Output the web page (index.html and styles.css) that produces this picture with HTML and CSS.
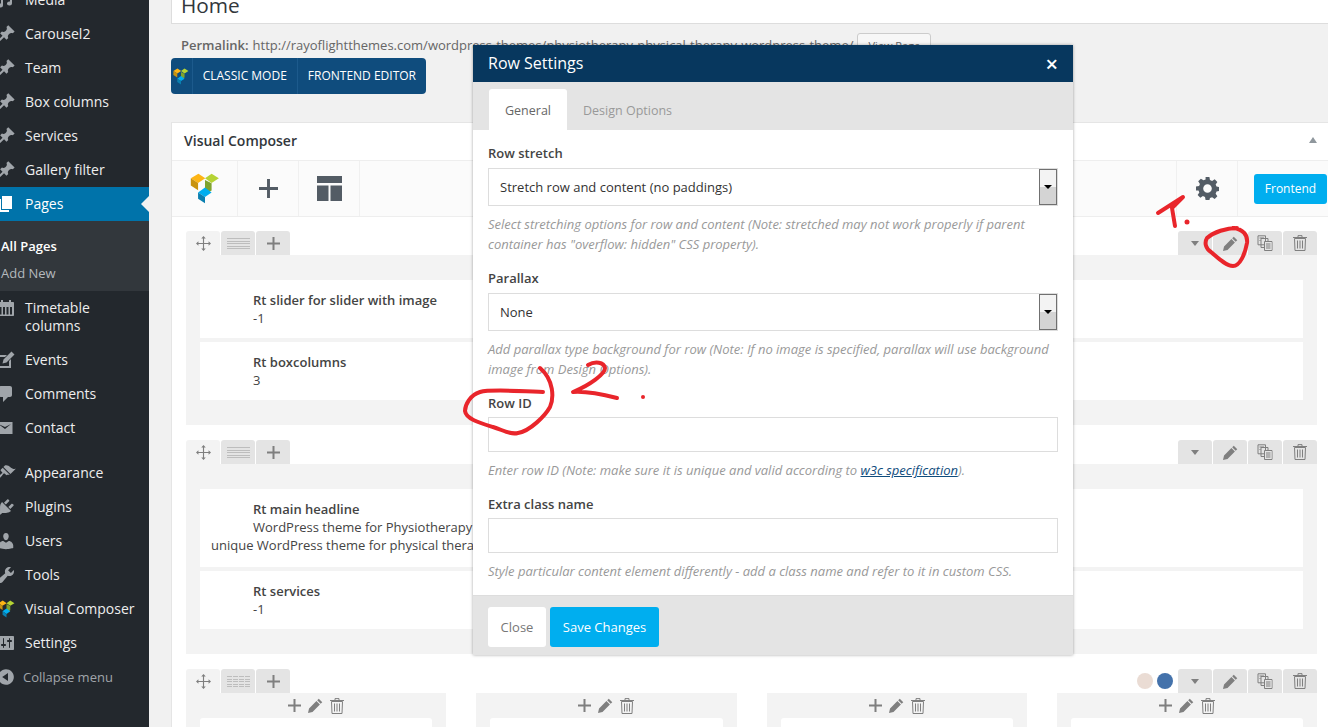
FILE: index.html
```html
<!DOCTYPE html>
<html lang="en">
<head>
    <meta charset="UTF-8">
    <meta name="viewport" content="width=device-width, initial-scale=1.0">
    <title>Edit Page</title>
    <link rel="stylesheet" href="styles.css">
</head>
<body>
    <!-- shared icons -->
    <svg class="icon-defs" width="0" height="0">
        <symbol id="i-pin" viewBox="0 0 20 20"><path d="M10.44 3.02l1.82-1.82 6.36 6.35-1.83 1.82c-1.05-.68-2.48-.57-3.41.36l-.75.75c-.92.93-1.04 2.35-.35 3.41l-1.83 1.82-2.41-2.41-2.8 2.79c-.42.42-3.38 2.71-3.8 2.29s1.86-3.39 2.28-3.81l2.79-2.79L4.1 9.36l1.83-1.82c1.05.69 2.48.57 3.4-.36l.75-.75c.93-.92 1.05-2.35.36-3.41z"/></symbol>
        <symbol id="i-vc" viewBox="60 514 90 94">
            <path fill="#fdb515" d="M62 530l23-14 21 14-22 14z"/>
            <path fill="#c8930f" d="M62 530l22 14v22l-22-14z"/>
            <path fill="#b5d334" d="M105 530l20-14 22 14-22 14z"/>
            <path fill="#7fa32e" d="M105 535l20 10v22l-20 11z"/>
            <path fill="#00aeef" d="M84 573l21-15 20 15-20 14z"/>
            <path fill="#0a7fb0" d="M84 573l21 14v19l-21-14z"/>
        </symbol>
        <symbol id="i-move" viewBox="0 0 16 16"><path d="M8 0l2.4 2.6H8.6v4.8h4.8V5.600L16 8l-2.600 2.400V8.600H8.600v4.800h1.800L8 16l-2.400-2.600h1.800V8.600H2.600v1.800L0 8l2.600-2.400v1.800h4.800V2.600H5.600z"/></symbol>
        <symbol id="i-plus" viewBox="0 0 13 13"><path d="M5.500 0h2v5.500H13v2H7.500V13h-2V7.500H0v-2h5.500z"/></symbol>
        <symbol id="i-pencil" viewBox="0 0 16 16"><path d="M11.500.8l3.700 3.700-1.700 1.700-3.700-3.700zM9 3.300L12.700 7l-7.900 7.900L0 16l1.100-4.800z"/></symbol>
        <symbol id="i-copy" viewBox="0 0 16 16"><path fill="none" stroke="currentColor" d="M1 .8h7.500v9H1zM4 3.500h7v9H4zM7.500 6.500H15v9H7.500z"/><path fill="#e4e4e4" d="M8 7h6.500v8H8z"/><path fill="none" stroke="currentColor" d="M9 9h4.500M9 11h4.500M9 13h4.500M2.500 3h4.500M2.500 5.500h1"/></symbol>
        <symbol id="i-trash" viewBox="0 0 14 16"><path fill="none" stroke="currentColor" d="M1.500 3.500h11l-.5 12H2zM0 2.500h14M5 2.500V.6h4v1.900M4.500 5.500v8M7 5.500v8M9.500 5.500v8"/></symbol>
    </svg>

    <div class="layout">
        <!-- admin menu -->
        <aside class="sidebar">
            <ul class="menu">
                <li class="menu-item"><svg class="menu-icon" viewBox="0 0 20 20"><path d="M5 6l11-3v10.500a2.500 2 0 1 1-2-2V6.500L7 8.300v7.200a2.500 2 0 1 1-2-2z"/></svg>Media</li>
                <li class="menu-item"><svg class="menu-icon"><use href="#i-pin"/></svg>Carousel2</li>
                <li class="menu-item"><svg class="menu-icon"><use href="#i-pin"/></svg>Team</li>
                <li class="menu-item"><svg class="menu-icon"><use href="#i-pin"/></svg>Box columns</li>
                <li class="menu-item"><svg class="menu-icon"><use href="#i-pin"/></svg>Services</li>
                <li class="menu-item"><svg class="menu-icon"><use href="#i-pin"/></svg>Gallery filter</li>
                <li class="menu-item active"><svg class="menu-icon" viewBox="0 0 20 20"><path d="M6 15V2h10v13H6zm-1 1h8v2H3V5h2v11z"/></svg>Pages</li>
                <li class="submenu">
                    <div class="sub-current">All Pages</div>
                    <div class="sub-link">Add New</div>
                </li>
                <li class="menu-item tall"><svg class="menu-icon" viewBox="0 0 20 20"><path d="M3 4h2V2h2v2h6V2h2v2h2c.6 0 1 .4 1 1v12c0 .6-.4 1-1 1H3c-.6 0-1-.4-1-1V5c0-.6.4-1 1-1zm.5 5v7.500h2V9zm3.500 0v7.500h2V9zm3.500 0v7.500h2V9zm3.500 0v7.500h2V9z"/></svg><span>Timetable<br>columns</span></li>
                <li class="menu-item"><svg class="menu-icon" viewBox="0 0 20 20"><path d="M2 5h9L9 7H4v9h9v-5l2-2v9H2zM15.500 1.500l3 3-8 8-4 1 1-4z"/></svg>Events</li>
                <li class="menu-item"><svg class="menu-icon" viewBox="0 0 20 20"><path d="M5 2h9c1.100 0 2 .9 2 2v7c0 1.100-.9 2-2 2h-2l-5 5v-5H5c-1.100 0-2-.9-2-2V4c0-1.100.9-2 2-2z"/></svg>Comments</li>
                <li class="menu-item"><svg class="menu-icon" viewBox="0 0 20 20"><path d="M1 4h15.500v12H1zM2.500 6L9 11l6-5-6 3z" fill-rule="evenodd"/></svg>Contact</li>
                <li class="menu-item spaced"><svg class="menu-icon" viewBox="0 0 20 20"><path d="M14.480 11.060L7.410 3.990l1.500-1.500c.5-.56 2.300-.47 3.510.32 1.210.8 1.430 1.280 2.910 2.100 1.180.64 2.450 1.260 4.450.85zm-.71.71L6.700 4.700 4.930 6.470c-.39.39-.39 1.020 0 1.410l1.060 1.060c.39.39.39 1.030 0 1.420-.6.6-1.430 1.110-2.210 1.690-.35.26-.7.53-1.010.84C1.430 13.230.4 14.850 1.160 15.600c.68.68 1.900.19 2.930-.81.670-.64 1.180-1.170 1.670-1.770.59-.77 1.100-1.600 1.700-2.210.39-.39 1.020-.39 1.420 0l1.060 1.060c.39.39 1.020.39 1.410 0z"/></svg>Appearance</li>
                <li class="menu-item"><svg class="menu-icon" viewBox="0 0 20 20"><path d="M13.110 4.360L9.870 7.600 8 5.730l3.240-3.240c.35-.34 1.050-.2 1.560.32.52.51.66 1.210.31 1.550zm-8 1.770l.91-1.120 9.010 9.010-1.190.84c-.71.71-2.630 1.160-3.820 1.160H6.140L4.900 17.260c-.59.59-1.540.59-2.120 0-.59-.58-.59-1.530 0-2.120l1.240-1.240v-3.880c0-1.130.4-3.190 1.090-3.890zm7.260 3.970l3.240-3.240c.34-.35 1.040-.21 1.550.31.52.51.66 1.210.31 1.550l-3.240 3.250z"/></svg>Plugins</li>
                <li class="menu-item"><svg class="menu-icon" viewBox="0 0 20 20"><path d="M10 9.250c-2.270 0-2.730-3.440-2.730-3.440C7 4.020 7.820 2 9.970 2c2.160 0 2.980 2.020 2.710 3.810 0 0-.41 3.440-2.680 3.440zm0 2.570L12.720 10c2.390 0 4.520 2.330 4.520 4.530v2.490s-3.650 1.130-7.240 1.130c-3.650 0-7.240-1.130-7.240-1.130v-2.490c0-2.250 1.940-4.480 4.470-4.480z"/></svg>Users</li>
                <li class="menu-item"><svg class="menu-icon" viewBox="0 0 20 20"><path d="M16.680 9.770c-1.340 1.340-3.300 1.670-4.950.99l-5.410 6.520c-.99.99-2.590.99-3.580 0s-.99-2.590 0-3.570l6.520-5.420c-.68-1.650-.35-3.610.99-4.950 1.280-1.280 3.120-1.620 4.720-1.060l-2.890 2.890 2.820 2.820 2.860-2.870c.53 1.580.18 3.390-1.080 4.650z"/></svg>Tools</li>
                <li class="menu-item"><svg class="menu-icon vc-small"><use href="#i-vc"/></svg>Visual Composer</li>
                <li class="menu-item"><svg class="menu-icon" viewBox="0 0 20 20"><path fill-rule="evenodd" d="M18 16V4c0-.55-.45-1-1-1H3c-.55 0-1 .45-1 1v12c0 .55.45 1 1 1h14c.55 0 1-.45 1-1zM8 11h1c.55 0 1 .45 1 1s-.45 1-1 1H8v1.500c0 .28-.22.5-.5.5s-.5-.22-.5-.5V13H6c-.55 0-1-.45-1-1s.45-1 1-1h1V5.500c0-.28.22-.5.5-.5s.5.22.5.5V11zm5-2h-1c-.55 0-1-.45-1-1s.45-1 1-1h1V5.500c0-.28.22-.5.5-.5s.5.22.5.5V7h1c.55 0 1 .45 1 1s-.45 1-1 1h-1v5.500c0 .28-.22.5-.5.5s-.5-.22-.5-.5V9z"/></svg>Settings</li>
                <li class="menu-item collapse"><svg class="menu-icon" viewBox="0 0 20 20"><path d="M10 2.160c4.330 0 7.840 3.510 7.840 7.840s-3.510 7.840-7.840 7.840S2.160 14.330 2.160 10 5.710 2.160 10 2.160zm2 11.720V6.120L6.180 9.970z"/></svg>Collapse menu</li>
            </ul>
        </aside>

        <main class="content">
            <div class="title-box">Home</div>
            <div class="permalink">
                <b>Permalink:</b> http://rayoflightthemes.com/wordpress-themes/physiotherapy-physical-therapy-wordpress-theme/
                <span class="view-page">View Page</span>
            </div>
            <div class="mode-bar">
                <span class="mode-logo"><svg class="mode-logo-icon"><use href="#i-vc"/></svg></span>
                <span class="mode-btn">CLASSIC MODE</span>
                <span class="mode-btn">FRONTEND EDITOR</span>
            </div>

            <section class="panel">
                <header class="panel-head">
                    <h2>Visual Composer</h2>
                    <span class="panel-toggle"></span>
                </header>
                <div class="toolbar">
                    <span class="tool"><svg class="tool-logo"><use href="#i-vc"/></svg></span>
                    <span class="tool"><svg class="tool-plus"><use href="#i-plus"/></svg></span>
                    <span class="tool">
                        <svg class="tool-layout" viewBox="0 0 25 25"><path d="M0 0h25v7H0zM0 9.500h11.500V25H0zM13.500 9.500H25V25H13.500z"/></svg>
                    </span>
                    <span class="toolbar-gap"></span>
                    <span class="tool tool-left"><svg class="tool-gear" viewBox="0 0 24 24"><path fill-rule="evenodd" d="M10 0h4l.6 3.200 2.200.9L19.500 2.300l2.800 2.800-1.800 2.700.9 2.200 3.200.6v4l-3.200.6-.9 2.200 1.800 2.700-2.800 2.800-2.700-1.800-2.200.9L14 24h-4l-.6-3.200-2.200-.9-2.700 1.800-2.800-2.800 1.800-2.700-.9-2.200L0 14v-4l3.200-.6.9-2.200-1.800-2.700 2.800-2.800 2.700 1.800 2.200-.9zM12 7.500a4.500 4.500 0 1 0 0 9 4.500 4.500 0 0 0 0-9z"/></svg></span>
                    <span class="frontend-wrap"><span class="frontend-btn">Frontend</span></span>
                </div>

                <div class="row-block">
                    <div class="row-tabs">
                        <span class="row-tab first"><svg class="ic-move"><use href="#i-move"/></svg></span>
                        <span class="row-tab"><span class="lines"></span></span>
                        <span class="row-tab"><svg class="ic-plus"><use href="#i-plus"/></svg></span>
                        <span class="row-tabs-gap"></span>
                        <span class="row-tab"><span class="caret"></span></span>
                        <span class="row-tab"><svg class="ic-pencil"><use href="#i-pencil"/></svg></span>
                        <span class="row-tab"><svg class="ic-copy"><use href="#i-copy"/></svg></span>
                        <span class="row-tab"><svg class="ic-trash"><use href="#i-trash"/></svg></span>
                    </div>
                    <div class="row-body row-one">
                        <div class="card"><b>Rt slider for slider with image</b><p>-1</p></div>
                        <div class="card"><b>Rt boxcolumns</b><p>3</p></div>
                    </div>
                </div>

                <div class="row-block">
                    <div class="row-tabs">
                        <span class="row-tab first"><svg class="ic-move"><use href="#i-move"/></svg></span>
                        <span class="row-tab"><span class="lines"></span></span>
                        <span class="row-tab"><svg class="ic-plus"><use href="#i-plus"/></svg></span>
                        <span class="row-tabs-gap"></span>
                        <span class="row-tab"><span class="caret"></span></span>
                        <span class="row-tab"><svg class="ic-pencil"><use href="#i-pencil"/></svg></span>
                        <span class="row-tab"><svg class="ic-copy"><use href="#i-copy"/></svg></span>
                        <span class="row-tab"><svg class="ic-trash"><use href="#i-trash"/></svg></span>
                    </div>
                    <div class="row-body row-one">
                        <div class="card card-long">
                            <b>Rt main headline</b>
                            <p>WordPress theme for Physiotherapy</p>
                            <p class="outdent">unique WordPress theme for physical therapy</p>
                        </div>
                        <div class="card"><b>Rt services</b><p>-1</p></div>
                    </div>
                </div>

                <div class="row-block">
                    <div class="row-tabs">
                        <span class="row-tab first"><svg class="ic-move"><use href="#i-move"/></svg></span>
                        <span class="row-tab"><span class="lines four"></span></span>
                        <span class="row-tab"><svg class="ic-plus"><use href="#i-plus"/></svg></span>
                        <span class="row-tabs-gap"></span>
                        <span class="row-dot photo"></span>
                        <span class="row-dot blue"></span>
                        <span class="row-tab"><span class="caret"></span></span>
                        <span class="row-tab"><svg class="ic-pencil"><use href="#i-pencil"/></svg></span>
                        <span class="row-tab"><svg class="ic-copy"><use href="#i-copy"/></svg></span>
                        <span class="row-tab"><svg class="ic-trash"><use href="#i-trash"/></svg></span>
                    </div>
                    <div class="columns">
                        <div class="column">
                            <div class="col-tools"><svg class="ic-plus"><use href="#i-plus"/></svg><svg class="ic-pencil"><use href="#i-pencil"/></svg><svg class="ic-trash"><use href="#i-trash"/></svg></div>
                            <div class="col-card"></div>
                        </div>
                        <div class="column">
                            <div class="col-tools"><svg class="ic-plus"><use href="#i-plus"/></svg><svg class="ic-pencil"><use href="#i-pencil"/></svg><svg class="ic-trash"><use href="#i-trash"/></svg></div>
                            <div class="col-card"></div>
                        </div>
                        <div class="column">
                            <div class="col-tools"><svg class="ic-plus"><use href="#i-plus"/></svg><svg class="ic-pencil"><use href="#i-pencil"/></svg><svg class="ic-trash"><use href="#i-trash"/></svg></div>
                            <div class="col-card"></div>
                        </div>
                        <div class="column">
                            <div class="col-tools"><svg class="ic-plus"><use href="#i-plus"/></svg><svg class="ic-pencil"><use href="#i-pencil"/></svg><svg class="ic-trash"><use href="#i-trash"/></svg></div>
                            <div class="col-card"></div>
                        </div>
                    </div>
                </div>
            </section>
        </main>
    </div>

    <!-- Row Settings dialog -->
    <div class="modal">
        <div class="modal-head">
            <span>Row Settings</span>
            <span class="modal-close">&times;</span>
        </div>
        <div class="modal-tabs">
            <span class="modal-tab current">General</span>
            <span class="modal-tab">Design Options</span>
        </div>
        <div class="modal-body">
            <div class="field">
                <label>Row stretch</label>
                <div class="select"><span>Stretch row and content (no paddings)</span><span class="select-arrow"></span></div>
                <p class="hint">Select stretching options for row and content (Note: stretched may not work properly if parent container has "overflow: hidden" CSS property).</p>
            </div>
            <div class="field">
                <label>Parallax</label>
                <div class="select"><span>None</span><span class="select-arrow"></span></div>
                <p class="hint">Add parallax type background for row (Note: If no image is specified, parallax will use background image from Design Options).</p>
            </div>
            <div class="field">
                <label>Row ID</label>
                <input type="text" class="text-input">
                <p class="hint">Enter row ID (Note: make sure it is unique and valid according to <a href="#">w3c specification</a>).</p>
            </div>
            <div class="field">
                <label>Extra class name</label>
                <input type="text" class="text-input">
                <p class="hint">Style particular content element differently - add a class name and refer to it in custom CSS.</p>
            </div>
        </div>
        <div class="modal-foot">
            <span class="btn-close">Close</span>
            <span class="btn-save">Save Changes</span>
        </div>
    </div>

    <!-- red marker scribbles on top of the screenshot -->
    <svg class="scribbles" viewBox="0 0 1328 727">
        <path d="M1158 213L1183 197 1172 208 1175 226"/>
        <path d="M1237 228C1226 228 1214 232 1207 238 1204 243 1206 249 1211 252 1218 258 1226 266 1233 266 1240 266 1245 254 1247 243 1248 235 1243 229 1233 228"/>
        <path d="M543 392C520 391 490 389 480 392 470 395 465 405 465 411 466 419 480 423 493 427 503 430 510 435 518 433 530 431 545 416 550 407 554 398 554 380 540 368"/>
        <path d="M588 365C595 361 604 362 605 368 605 374 590 385 573 392 585 391 605 395 617 398"/>
        <circle class="dot" cx="1187" cy="222" r="2.500"/>
        <circle class="dot" cx="643" cy="397" r="2"/>
    </svg>
</body>
</html>
```

FILE: styles.css
```css
* {
    box-sizing: border-box;
}
html, body {
    margin: 0;
    height: 727px;
    overflow: hidden;
}
body {
    font-family: "Open Sans", sans-serif;
    font-size: 13px;
    color: #444;
    background-color: #f1f1f1;
}
.icon-defs {
    position: absolute;
}
.layout {
    display: flex;
    height: 727px;
    overflow: hidden;
}

/* Sidebar */
.sidebar {
    flex: 0 0 149px;
    background-color: #23282d;
    color: #eee;
    font-size: 14px;
}
.menu {
    list-style: none;
    margin: -17px 0 0;
    padding: 0;
}
.menu-item {
    position: relative;
    display: flex;
    align-items: center;
    height: 34px;
    padding-left: 25px;
    line-height: 18px;
}
.menu-icon {
    position: absolute;
    left: -4px;
    top: 7px;
    width: 20px;
    height: 20px;
    fill: #a0a5aa;
}
.menu-item.active {
    background-color: #0073aa;
    color: #fff;
}
.menu-item.active .menu-icon {
    fill: #fff;
}
.menu-item.active::after {
    content: "";
    position: absolute;
    right: 0;
    top: 9px;
    border: 8px solid transparent;
    border-right-color: #f1f1f1;
    border-left-width: 0;
}
.menu-item.tall {
    height: 52px;
}
.menu-item.spaced {
    margin-top: 11px;
}
.menu-item.collapse {
    padding-left: 23px;
    font-size: 13px;
    color: #a0a5aa;
}
.vc-small {
    left: -2px;
    width: 17px;
    height: 18px;
    top: 8px;
}
.submenu {
    height: 70px;
    padding: 12px 0 0 1px;
    background-color: #32373c;
    font-size: 13px;
    line-height: 27px;
}
.sub-current {
    font-weight: 600;
    color: #fff;
}
.sub-link {
    color: #b4b9be;
}

/* Main column */
.content {
    flex: 1;
    min-width: 0;
    padding-left: 22px;
}
.title-box {
    height: 39px;
    margin-top: -15px;
    padding: 6px 0 0 9px;
    background-color: #fff;
    border: 1px solid #ddd;
    border-right: 0;
    font-size: 20.8px;
    line-height: 26px;
    color: #32373c;
}
.permalink {
    display: flex;
    gap: 4px;
    align-items: flex-start;
    height: 34px;
    margin-top: 9px;
    padding-left: 10px;
    line-height: 24px;
    color: #666;
    white-space: nowrap;
}
.permalink b {
    font-weight: 600;
}
.view-page {
    height: 24px;
    padding: 0 10px;
    background-color: #f7f7f7;
    border: 1px solid #ccc;
    border-radius: 3px;
    font-size: 11px;
}
.mode-bar {
    display: flex;
    width: 255px;
    height: 36px;
    margin-top: -9px;
    background-color: #0f4c7d;
    border-radius: 4px;
    color: #fff;
    font-size: 12px;
    line-height: 36px;
}
.mode-logo {
    display: flex;
    align-items: center;
    justify-content: center;
    width: 37px;
}
.mode-logo-icon {
    width: 16px;
    height: 17px;
}
.mode-btn {
    padding: 0 10px;
    border-left: 1px solid #1c5a8c;
    white-space: nowrap;
}
.mode-btn:first-of-type {
    padding: 0 10px;
}
.panel {
    margin-top: 28px;
    background-color: #fff;
    border: 1px solid #e5e5e5;
    border-right: 0;
}
.panel-head {
    position: relative;
    height: 37px;
    padding: 8px 0 0 12px;
}
.panel-head h2 {
    margin: 0;
    font-size: 14px;
    font-weight: 600;
    line-height: 20px;
    color: #32373c;
}
.panel-toggle {
    position: absolute;
    right: 11px;
    top: 14px;
    border: 4px solid transparent;
    border-top: 0;
    border-bottom: 6px solid #8f979d;
}
.toolbar {
    display: flex;
    height: 57px;
    background-color: #fbfbfb;
    border-top: 1px solid #eee;
    border-bottom: 1px solid #eee;
}
.tool {
    display: flex;
    align-items: center;
    justify-content: center;
    width: 61px;
    border-right: 1px solid #f0f0f0;
    fill: #535c65;
}
.tool:first-child {
    width: 66px;
}
.tool-left {
    width: 61px;
    border-right: 0;
    border-left: 1px solid #f0f0f0;
}
.tool-logo {
    width: 30px;
    height: 31px;
}
.tool-plus {
    width: 19px;
    height: 19px;
}
.tool-layout {
    width: 25px;
    height: 25px;
}
.tool-gear {
    width: 23px;
    height: 23px;
}
.toolbar-gap {
    flex: 1;
}
.frontend-wrap {
    display: flex;
    align-items: center;
    width: 91px;
    padding-left: 16px;
    border-left: 1px solid #f0f0f0;
}
.frontend-btn {
    width: 73px;
    height: 30px;
    background-color: #00aeef;
    border-radius: 3px;
    color: #fff;
    font-size: 12px;
    line-height: 30px;
    text-align: center;
}

/* Rows in the builder */
.row-block {
    margin: 14px 11px 15px 14px;
}
.row-tabs {
    display: flex;
    align-items: flex-end;
    gap: 1px;
    height: 24px;
    color: #7f7f7f;
    fill: #7f7f7f;
}
.row-tab {
    display: flex;
    align-items: center;
    justify-content: center;
    width: 34px;
    height: 24px;
    background-color: #e4e4e4;
    border-radius: 3px 3px 0 0;
}
.row-tab.first {
    background-color: #f3f3f3;
}
.row-tabs-gap {
    flex: 1;
}
.row-dot {
    align-self: center;
    width: 16px;
    height: 16px;
    margin-right: 4px;
    border-radius: 50%;
}
.row-dot.photo {
    margin-right: 3px;
    background-color: #eadcd4;
}
.row-dot.blue {
    background-color: #4472ab;
}
.ic-move {
    width: 15px;
    height: 15px;
}
.ic-plus {
    width: 13px;
    height: 13px;
}
.ic-pencil {
    width: 15px;
    height: 15px;
}
.ic-copy {
    width: 16px;
    height: 16px;
}
.ic-trash {
    width: 14px;
    height: 16px;
}
.lines {
    width: 23px;
    height: 11px;
    background: repeating-linear-gradient(#bdbdbd 0 1px, transparent 1px 2.500px);
}
.lines.four {
    background: linear-gradient(90deg, transparent 5px, #e4e4e4 5px 6px, transparent 6px 11px, #e4e4e4 11px 12px, transparent 12px 17px, #e4e4e4 17px 18px, transparent 18px), repeating-linear-gradient(#bdbdbd 0 1px, transparent 1px 2.500px);
}
.caret {
    border: 4.500px solid transparent;
    border-top: 5px solid #7f7f7f;
    border-bottom: 0;
}
.row-body {
    background-color: #f3f3f3;
}
.row-one {
    padding: 25px 14px 25px;
}
.card {
    height: 58px;
    margin-bottom: 4px;
    padding: 11px 0 0 53px;
    background-color: #fff;
    line-height: 18px;
    white-space: nowrap;
}
.card:last-child {
    margin-bottom: 0;
}
.card b {
    font-weight: 600;
}
.card p {
    margin: 0;
}
.card-long {
    height: 78px;
    padding-left: 53px;
}
.card-long p.outdent {
    margin-left: -42px;
}
.columns {
    display: flex;
    gap: 30px;
}
.column {
    flex: 1;
    height: 60px;
    padding: 0 14px;
    background-color: #f3f3f3;
}
.col-tools {
    display: flex;
    align-items: center;
    justify-content: center;
    gap: 7px;
    height: 25px;
    color: #7f7f7f;
    fill: #7f7f7f;
}
.col-card {
    height: 40px;
    background-color: #fff;
    border-radius: 3px 3px 0 0;
}

/* Row Settings dialog */
.modal {
    position: absolute;
    left: 473px;
    top: 45px;
    width: 600px;
    height: 610px;
    display: flex;
    flex-direction: column;
    background-color: #fff;
    box-shadow: 0 0 3px rgba(0, 0, 0, 0.35);
}
.modal-head {
    display: flex;
    justify-content: space-between;
    align-items: center;
    height: 38px;
    padding: 0 15px;
    background-color: #07375e;
    color: #fff;
    font-size: 16px;
}
.modal-close {
    font-size: 22px;
    font-weight: 600;
    margin-right: 0;
}
.modal-tabs {
    display: flex;
    align-items: flex-end;
    height: 50px;
    padding-left: 16px;
    background-color: #e4e4e4;
}
.modal-tab {
    height: 41px;
    padding: 0 16px;
    border-radius: 3px 3px 0 0;
    font-size: 12.500px;
    line-height: 43px;
    color: #999;
}
.modal-tab.current {
    background-color: #fff;
    color: #666;
}
.modal-body {
    flex: 1;
    padding: 13px 15px 0;
}
.field {
    margin-bottom: 14px;
}
.field label {
    display: block;
    margin-bottom: 5px;
    font-weight: 600;
    line-height: 20px;
}
.select {
    display: flex;
    justify-content: space-between;
    align-items: center;
    height: 38px;
    padding: 0 0 0 11px;
    border: 1px solid #ddd;
    color: #333;
}
.select-arrow {
    position: relative;
    width: 18px;
    height: 36px;
    margin-right: 0;
    background: linear-gradient(#f3f3f3 0 50%, #d4d4d4 50%);
    border: 1px solid #707070;
}
.select-arrow::after {
    content: "";
    position: absolute;
    left: 4px;
    top: 15px;
    border: 4px solid transparent;
    border-top: 4px solid #000;
    border-bottom: 0;
}
.text-input {
    display: block;
    width: 100%;
    height: 35px;
    margin-top: -1px;
    border: 1px solid #ddd;
    background-color: #fff;
}
.hint {
    margin: 8px 0 0;
    font-style: italic;
    line-height: 20px;
    color: #999;
}
.hint a {
    color: #0f4c7d;
}
.modal-foot {
    display: flex;
    gap: 4px;
    height: 61px;
    padding: 11px 15px 0;
    background-color: #e4e4e4;
    border-top: 1px solid #ddd;
    line-height: 40px;
}
.btn-close {
    width: 58px;
    height: 40px;
    background-color: #fff;
    border-radius: 3px;
    color: #777;
    text-align: center;
}
.btn-save {
    width: 109px;
    height: 40px;
    background-color: #00aeef;
    border-radius: 3px;
    color: #fff;
    text-align: center;
}

.scribbles {
    position: absolute;
    left: 0;
    top: 0;
    width: 1328px;
    height: 727px;
    fill: none;
    stroke: #e9252b;
    stroke-width: 4;
    stroke-linecap: round;
    stroke-linejoin: round;
    pointer-events: none;
}
.scribbles .dot {
    fill: #e9252b;
    stroke: none;
}
```
